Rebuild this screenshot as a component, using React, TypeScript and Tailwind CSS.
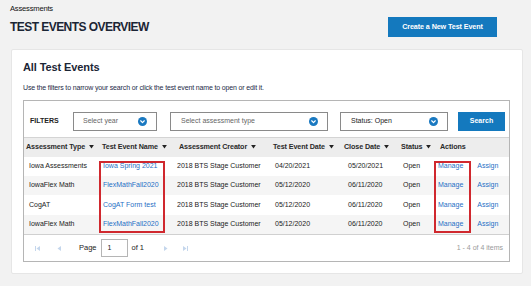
import React from "react";

const Chevron = () => (
  <svg width="9" height="9" viewBox="0 0 10 10" className="shrink-0">
    <circle cx="5" cy="5" r="5" fill="#1a79c1" />
    <path d="M3 4.2 L5 6.2 L7 4.2" stroke="#fff" strokeWidth="1.3" fill="none" strokeLinecap="round" strokeLinejoin="round" />
  </svg>
);

const Sort = () => (
  <svg width="5" height="4" viewBox="0 0 6 5" className="ml-[4px] inline-block">
    <path d="M0 0 H6 L3 4.5 Z" fill="#222" />
  </svg>
);

const rows = [
  ["Iowa Assessments", "Iowa Spring 2021", "04/20/2021", "05/20/2021"],
  ["IowaFlex Math", "FlexMathFall2020", "05/12/2020", "06/11/2020"],
  ["CogAT", "CogAT Form test", "05/12/2020", "06/11/2020"],
  ["IowaFlex Math", "FlexMathFall2020", "05/12/2020", "06/11/2020"],
];

const grid = "grid grid-cols-[75px_76px_95px_72px_57px_38px_1fr]";

export default function App() {
  return (
    <div
      className="w-[531px] h-[286px] bg-[#f2f2f2] pt-[4px] pl-[10px] text-[#222] overflow-hidden"
      style={{ fontFamily: '"Liberation Sans", Arial, sans-serif' }}
    >
      <div className="text-[7.6px] leading-[10px] tracking-[-0.2px] text-[#111]">Assessments</div>
      <div className="mt-[3px] flex items-center justify-between w-[487px]">
        <h1 className="text-[12px] font-bold tracking-[-0.55px] text-[#1b2535] leading-[14px]">
          TEST EVENTS OVERVIEW
        </h1>
        <button className="h-[20px] w-[109px] bg-[#1479be] text-white text-[7.2px] font-bold tracking-[-0.1px]">
          Create a New Test Event
        </button>
      </div>
      <div className="mt-[12px] ml-[1px] w-[512px] bg-white rounded-[2px] border border-[#e6e6e6] pt-[11px] pl-[11px] pb-[11px]">
        <h2 className="text-[11px] font-bold leading-[13px] text-[#1b2535] tracking-[-0.1px]">All Test Events</h2>
        <p className="mt-[9px] text-[7px] leading-[9px] text-[#1c2a48] tracking-[-0.15px]">
          Use the filters to narrow your search or click the test event name to open or edit it.
        </p>
        <div className="mt-[8px] w-[487px] border border-[#b5b5b5]">
          <div className="flex items-center h-[19px] mt-[11px] pl-[6px]">
            <span className="text-[7px] font-bold text-[#222] w-[43px]">FILTERS</span>
            <div className="w-[84px] h-[19px] border border-[#8a8a8a] flex items-center justify-between pl-[9px] pr-[9px] text-[7px] text-[#666]">
              <span>Select year</span>
              <Chevron />
            </div>
            <div className="ml-[13px] w-[158px] h-[19px] border border-[#8a8a8a] flex items-center justify-between pl-[10px] pr-[9px] text-[7px] text-[#666]">
              <span>Select assessment type</span>
              <Chevron />
            </div>
            <div className="ml-[12px] w-[108px] h-[19px] border border-[#8a8a8a] flex items-center justify-between pl-[10px] pr-[9px] text-[7px] text-[#222]">
              <span>Status: Open</span>
              <Chevron />
            </div>
            <button className="ml-[10px] w-[47px] h-[19px] bg-[#1479be] text-white text-[7px] font-bold">Search</button>
          </div>
          <div className="mt-[6px] relative">
            <div className={`${grid} h-[20px] items-center bg-[#ededed] border-t border-[#d4d4d4] text-[7.2px] font-bold text-[#2a2a2a] tracking-[-0.1px]`}>
              <div className="pl-[2px] flex items-center">Assessment Type<Sort /></div>
              <div className="pl-[3px] flex items-center">Test Event Name<Sort /></div>
              <div className="pl-[4px] flex items-center">Assessment Creator<Sort /></div>
              <div className="pl-[3px] flex items-center">Test Event Date<Sort /></div>
              <div className="pl-[2px] flex items-center">Close Date<Sort /></div>
              <div className="pl-[2px] flex items-center">Status<Sort /></div>
              <div className="pl-[3px]">Actions</div>
            </div>
            {rows.map((r, i) => (
              <div
                key={i}
                className={`${grid} ${i === 2 ? "h-[20px]" : "h-[19px]"} items-center text-[7px] text-[#222] ${i % 2 === 1 ? "bg-[#f5f5f5]" : "bg-white"}`}
              >
                <div className="pl-[5px] whitespace-nowrap">{r[0]}</div>
                <div className="pl-[4px] text-[#1f6fc5] whitespace-nowrap">{r[1]}</div>
                <div className="pl-[2px] whitespace-nowrap overflow-hidden">2018 BTS Stage Customer</div>
                <div className="pl-[5px]">{r[2]}</div>
                <div className="pl-[6px]">{r[3]}</div>
                <div className="pl-[4px]">Open</div>
                <div className="flex text-[#1f6fc5]">
                  <span className="pl-[1px]">Manage</span>
                  <span className="ml-[14px]">Assign</span>
                </div>
              </div>
            ))}
            <div className="absolute left-[75px] top-[24px] w-[66px] h-[72px] border-2 border-[#d0282e]" />
            <div className="absolute left-[410px] top-[24px] w-[37px] h-[72px] border-2 border-[#d0282e]" />
          </div>
          <div className="h-[27px] border-t border-[#d0d0d0] flex items-center pl-[11px] pr-[6px] text-[7px]">
            <svg width="5" height="5" viewBox="0 0 5 5" className="text-[#c4d6ec]">
              <rect x="0" y="0" width="1" height="5" fill="currentColor" />
              <path d="M5 0 L1.5 2.5 L5 5 Z" fill="currentColor" />
            </svg>
            <svg width="4" height="5" viewBox="0 0 4 5" className="ml-[17px] text-[#c4d6ec]">
              <path d="M4 0 L0.5 2.5 L4 5 Z" fill="currentColor" />
            </svg>
            <span className="ml-[18px] text-[#222] text-[7.5px]">Page</span>
            <div className="ml-[4px] w-[27px] h-[18px] border border-[#b5b5b5] flex items-center pl-[6px] text-[7px]">1</div>
            <span className="ml-[4px] text-[#222] text-[7.5px]">of 1</span>
            <svg width="4" height="5" viewBox="0 0 4 5" className="ml-[20px] text-[#c4d6ec]">
              <path d="M0 0 L3.5 2.5 L0 5 Z" fill="currentColor" />
            </svg>
            <svg width="5" height="5" viewBox="0 0 5 5" className="ml-[15px] text-[#c4d6ec]">
              <path d="M0 0 L3.5 2.5 L0 5 Z" fill="currentColor" />
              <rect x="4" y="0" width="1" height="5" fill="currentColor" />
            </svg>
            <span className="ml-auto text-[#9a9a9a] text-[7px]">1 - 4 of 4 items</span>
          </div>
        </div>
      </div>
    </div>
  );
}
